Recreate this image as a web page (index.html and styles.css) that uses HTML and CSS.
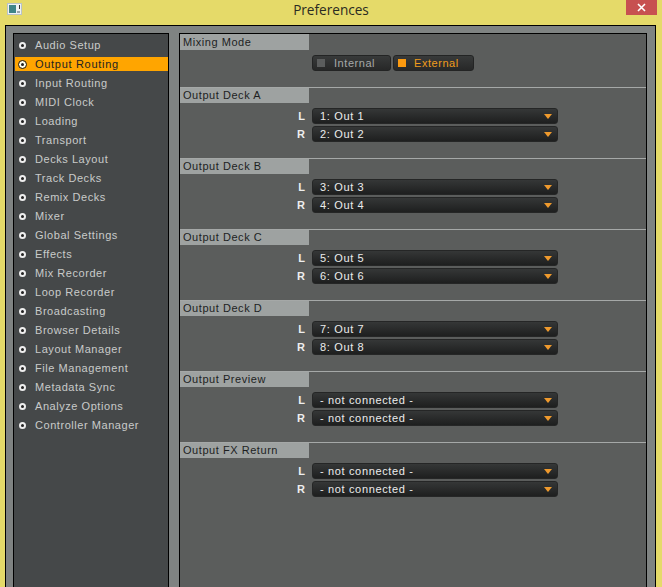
FILE: index.html
```html
<!DOCTYPE html>
<html lang="en">
<head>
    <meta charset="UTF-8">
    <meta name="viewport" content="width=device-width, initial-scale=1.0">
    <title>Preferences</title>
    <link rel="stylesheet" href="styles.css">
</head>
<body>
    <div class="titlebar">
        <svg class="app-icon" width="15" height="12" viewBox="0 0 15 12">
            <rect x="0.5" y="0.5" width="14" height="11" fill="#eef2f4" stroke="#b9c2c8"/>
            <rect x="2" y="2" width="7" height="8" fill="#3f8587"/>
            <rect x="12" y="2" width="1" height="4" fill="#333"/>
            <rect x="10" y="8" width="3" height="2" fill="#9aa4aa"/>
        </svg>
        <span class="title">Preferences</span>
        <div class="close">
            <svg width="9" height="9" viewBox="0 0 9 9"><path d="M1 1l7 7M8 1l-7 7" stroke="#fff" stroke-width="1.6"/></svg>
        </div>
    </div>

    <div class="window">
        <ul class="sidebar">
            <li><i class="dot"></i>Audio Setup</li>
            <li class="active"><i class="dot"></i>Output Routing</li>
            <li><i class="dot"></i>Input Routing</li>
            <li><i class="dot"></i>MIDI Clock</li>
            <li><i class="dot"></i>Loading</li>
            <li><i class="dot"></i>Transport</li>
            <li><i class="dot"></i>Decks Layout</li>
            <li><i class="dot"></i>Track Decks</li>
            <li><i class="dot"></i>Remix Decks</li>
            <li><i class="dot"></i>Mixer</li>
            <li><i class="dot"></i>Global Settings</li>
            <li><i class="dot"></i>Effects</li>
            <li><i class="dot"></i>Mix Recorder</li>
            <li><i class="dot"></i>Loop Recorder</li>
            <li><i class="dot"></i>Broadcasting</li>
            <li><i class="dot"></i>Browser Details</li>
            <li><i class="dot"></i>Layout Manager</li>
            <li><i class="dot"></i>File Management</li>
            <li><i class="dot"></i>Metadata Sync</li>
            <li><i class="dot"></i>Analyze Options</li>
            <li><i class="dot"></i>Controller Manager</li>
        </ul>

        <div class="main">
            <section class="group group-mode">
                <h2>Mixing Mode</h2>
                <div class="mode-row">
                    <button class="mode" type="button"><i class="led"></i>Internal</button>
                    <button class="mode on" type="button"><i class="led"></i>External</button>
                </div>
            </section>

            <section class="group">
                <h2>Output Deck A</h2>
                <div class="row"><label>L</label><div class="select">1: Out 1<i class="arrow"></i></div></div>
                <div class="row"><label>R</label><div class="select">2: Out 2<i class="arrow"></i></div></div>
            </section>

            <section class="group">
                <h2>Output Deck B</h2>
                <div class="row"><label>L</label><div class="select">3: Out 3<i class="arrow"></i></div></div>
                <div class="row"><label>R</label><div class="select">4: Out 4<i class="arrow"></i></div></div>
            </section>

            <section class="group">
                <h2>Output Deck C</h2>
                <div class="row"><label>L</label><div class="select">5: Out 5<i class="arrow"></i></div></div>
                <div class="row"><label>R</label><div class="select">6: Out 6<i class="arrow"></i></div></div>
            </section>

            <section class="group">
                <h2>Output Deck D</h2>
                <div class="row"><label>L</label><div class="select">7: Out 7<i class="arrow"></i></div></div>
                <div class="row"><label>R</label><div class="select">8: Out 8<i class="arrow"></i></div></div>
            </section>

            <section class="group">
                <h2>Output Preview</h2>
                <div class="row"><label>L</label><div class="select">- not connected -<i class="arrow"></i></div></div>
                <div class="row"><label>R</label><div class="select">- not connected -<i class="arrow"></i></div></div>
            </section>

            <section class="group">
                <h2>Output FX Return</h2>
                <div class="row"><label>L</label><div class="select">- not connected -<i class="arrow"></i></div></div>
                <div class="row"><label>R</label><div class="select">- not connected -<i class="arrow"></i></div></div>
            </section>
        </div>
    </div>
</body>
</html>
```

FILE: styles.css
```css
html, body {
    height: 100%;
}
body {
    margin: 0;
    background-color: #e5da69;
    font-family: "Liberation Sans", Arial, sans-serif;
    display: flex;
    flex-direction: column;
    overflow: hidden;
}
.titlebar {
    height: 25px;
    flex: none;
    display: flex;
    justify-content: center;
    position: relative;
}
.title {
    font-family: "Open Sans", sans-serif;
    font-size: 13.6px;
    line-height: 20px;
    color: #2b2b22;
}
.app-icon {
    position: absolute;
    left: 7px;
    top: 3px;
}
.close {
    position: absolute;
    left: 626px;
    top: 0;
    width: 31px;
    height: 15px;
    background-color: #c75050;
    display: flex;
    align-items: center;
    justify-content: center;
}
.window {
    flex: 1;
    margin: 0 6px 0 5px;
    box-sizing: border-box;
    border: 1px solid #000;
    border-bottom: none;
    background-color: #7f8382;
    padding: 7px 8px 0 7px;
    display: flex;
    gap: 10px;
}
.sidebar {
    width: 156px;
    flex: none;
    box-sizing: border-box;
    margin: 0;
    padding: 2px 0 0 1px;
    list-style: none;
    background-color: #454849;
    border: 1px solid #000;
    border-bottom: none;
}
.sidebar li {
    height: 14px;
    margin: 2px 0 5px;
    display: flex;
    align-items: center;
    font-size: 11px;
    letter-spacing: 0.55px;
    color: #c9cbca;
}
.sidebar li.active {
    background-color: #ffa500;
    color: #222;
    letter-spacing: 0.7px;
}
.dot {
    width: 3px;
    height: 3px;
    margin: 0 9px 0 4px;
    border: 2.5px solid #eee;
    border-radius: 50%;
    background-color: #222;
}
.active .dot {
    width: 3px;
    height: 3px;
    border: 2px solid #ffe;
    outline: 1.5px solid #222;
}
.main {
    flex: 1;
    background-color: #5b5d5c;
    border: 1px solid #000;
    border-bottom: none;
}
.group {
    height: 71px;
    box-sizing: border-box;
    border-top: 1px solid #a5a8a7;
}
.group-mode {
    height: 53px;
    border-top: none;
}
.group h2 {
    margin: 0;
    width: 129px;
    height: 15px;
    box-sizing: border-box;
    padding-left: 3px;
    background-color: #9ea2a1;
    font-size: 11px;
    font-weight: normal;
    line-height: 15px;
    letter-spacing: 0.55px;
    color: #1d1f1f;
}
.group-mode h2 {
    height: 16px;
    line-height: 16px;
}
.mode-row {
    display: flex;
    gap: 2px;
    margin: 5px 0 0 132px;
}
.mode {
    width: 79px;
    height: 16px;
    padding: 0 0 0 4px;
    display: flex;
    align-items: center;
    background: linear-gradient(#383a3a, #272828);
    border: 1px solid #232424;
    border-radius: 3px;
    font-family: inherit;
    font-size: 11px;
    letter-spacing: 0.55px;
    color: #a6a8a8;
}
.mode.on {
    width: 81px;
    color: #f09c1c;
}
.led {
    width: 8px;
    height: 8px;
    margin-right: 9px;
    background-color: #5b5d5d;
}
.on .led {
    background-color: #fb9a10;
    margin-right: 8px;
}
.row {
    display: flex;
    margin-top: 2px;
}
.group h2 + .row {
    margin-top: 5px;
}
.row label {
    width: 125px;
    margin-right: 7px;
    text-align: right;
    font-size: 11px;
    font-weight: bold;
    line-height: 16px;
    color: #eee;
}
.select {
    width: 246px;
    height: 16px;
    box-sizing: border-box;
    padding-left: 7px;
    position: relative;
    background: linear-gradient(#353737, #1e1f1f);
    border: 1px solid #252626;
    border-radius: 3px;
    font-size: 11px;
    line-height: 14px;
    letter-spacing: 0.65px;
    color: #ececec;
}
.arrow {
    position: absolute;
    right: 5px;
    top: 5px;
    width: 0;
    height: 0;
    border-style: solid;
    border-width: 5px 4px 0;
    border-color: #ef9a2d transparent transparent;
}
```
